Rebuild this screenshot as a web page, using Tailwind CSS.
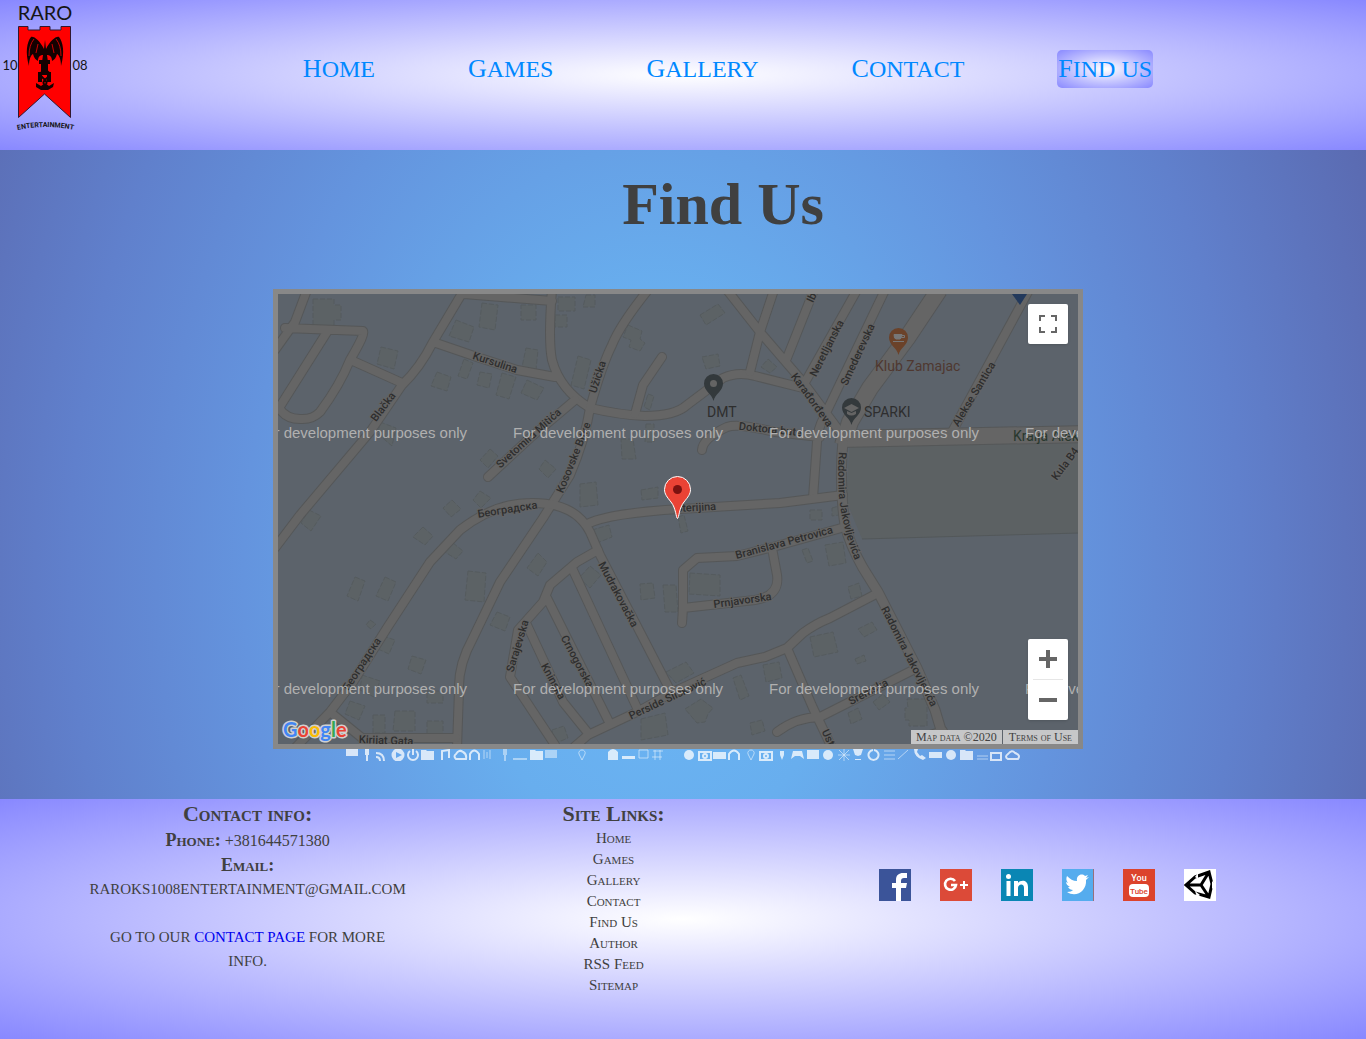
<!DOCTYPE html>
<html lang="en">
<head>
<meta charset="utf-8">
<meta name="viewport" content="width=device-width, initial-scale=1">
<title>RARO 1008 Entertainment - Find Us</title>
<script src="https://cdn.jsdelivr.net/npm/@tailwindcss/browser@4"></script>
</head>
<body class="flex min-h-screen flex-col font-['Liberation_Serif',serif] text-[#404040]">

<header class="flex h-[150px] shrink-0 items-start bg-[radial-gradient(white,#8888ff)]">
  <a href="#" aria-label="RARO Entertainment home" class="block w-[90px] shrink-0">
    <svg viewBox="0 0 90 135" class="block w-full">
      <g font-family="Lato, sans-serif" fill="#151515">
        <text x="45" y="20" font-size="20" text-anchor="middle">RARO</text>
        <text x="10" y="70" font-size="13" text-anchor="middle">10</text>
        <text x="80" y="70" font-size="13" text-anchor="middle">08</text>
      </g>
      <path d="M18.500 26.500H28V30H40V26.500H50V30H61V26.500H70.500V117.500L44.500 94L18.500 117.500Z" fill="#f00" stroke="#301830"/>
      <g fill="#140000">
        <path d="M44 49C40 41 34 36 31 37C27 42 25 52 29 66C29 59 31 55 33 54C34 58 36 60 38 61C38 57 40 55 43 55L42 62L45 66L48 62L47 55C50 55 52 57 52 61C54 60 56 58 57 54C59 55 61 59 61 66C65 52 63 42 59 37C56 36 50 41 46 49L45 40Z"/>
        <path d="M39 60h11v4h-2v8h3v10h-4v-7h-5v7h-4v-10h3v-8h-2zM36 83l5 3 4-3 4 3 5-3-1 4-5 3h-7l-5-3z"/>
      </g>
      <path d="M34 39Q29 45 29 56M56 39Q61 45 61 56M38 44L36 53M52 44L54 53" fill="none" stroke="#c00"/>
      <path d="M42 62Q50 66 44 70T43 78T46 84M48 62Q40 66 46 70T47 78T44 84" fill="none" stroke="#140000" stroke-width="2"/>
      <path id="arc" d="M13 131Q45 123 78 131" fill="none"/>
      <text font-family="Roboto, sans-serif" font-size="7" font-weight="700" fill="#151515"><textPath href="#arc" startOffset="50%" text-anchor="middle">ENTERTAINMENT</textPath></text>
    </svg>
  </a>
  <nav class="mt-[50px] flex flex-1 justify-center gap-[93px] text-[24px] leading-[38px] uppercase text-[#0088ff]">
    <a href="#" class="block first-letter:text-[26px]">Home</a>
    <a href="#" class="block first-letter:text-[26px]">Games</a>
    <a href="#" class="block first-letter:text-[26px]">Gallery</a>
    <a href="#" class="block first-letter:text-[26px]">Contact</a>
    <a href="#" class="block rounded-[5px] bg-[radial-gradient(white,#8888ff)] px-px first-letter:text-[26px]">Find us</a>
  </nav>
</header>

<main class="flex flex-col items-center bg-[radial-gradient(ellipse_58%_170%_at_48%_65%,#6cb8f6,#68aeee_25%,#6494de_52%,#6080cc_74%,#5a68ae)] pb-[38px]">
  <h1 class="pt-[19px] pl-20 text-[60px] leading-[70px] font-bold">Find Us</h1>

  <div class="relative mt-[50px] mr-[10px] w-[810px] max-w-full border-5 border-[#888]">
    <svg viewBox="278 294 800 450" class="block w-full bg-[#5c636b]" role="img" aria-label="Street map">
      <path d="M850 440L1080 438V533L862 539L846 500Z" fill="#5c6163"/>
      <path d="M862 539L1080 533" stroke="#53585a" fill="none"/>
      <g fill="#5c6265" stroke="#555b5e" stroke-dasharray="5 2">
        <path d="M313 299h21v6h7v15h-7v6h-21zM381 347l17 4-4 18-17-5zM456 320l18 7-5 15-20-6zM482 303l16 2-3 25-16-3zM521 305h15v15h-15zM526 348l12 2-2 20-14-3zM464 359l9 4-6 16-9-3zM480 372l12 2-3 14-12-3zM502 373l14 4-7 22-13-4zM527 380l17 8-7 12-16-7zM437 372l14 5-4 14-16-5zM380 422l16 6-4 18-14-12zM490 449l8 7-10 12-8-8zM480 491l11 7-10 10-8-8zM452 500l9 9-10 8-8-9zM309 510l12 6-10 15-10-8zM423 527l10 9-8 9-12-8zM453 543l10 8-7 8-11-7zM355 577l10 4-7 20-11-5zM385 577l11 5-8 19-12-5zM468 571l18 2-2 29-19-2zM497 612l13 5-5 14-15-6zM370 620l6 4-5 5-5-4zM383 636l12 4-6 14-11-5zM412 656l14 4-5 14-13-5zM362 675l18 6-6 16-14-7zM350 701l15 5-6 14-14-6zM373 715h12v18h-12zM395 711h20v20h-22zM427 691h16v12h-16zM427 721h16v15h-16zM538 553l9 9-9 14-11-8z"/>
        <path d="M558 297h17v14h-17zM586 295h9v12h-12zM555 315h12v12h-12zM628 325l14 6-2 8 5 4-5 8-11-4 2-7-8-3zM578 356l13 4-7 29-13-4zM648 394l6 2-4 14-6-3zM700 315l18-11 7 9-19 12zM702 357l16-3 2 12-14 3zM768 359l9 8-7 6-9-6zM621 439h12l3 20h-14zM646 424h8v18h-9zM545 460l11 9-8 9-9-9zM580 484l16-2 2 23-18 2zM641 490l17-3v11l-16 2zM592 530l17-5 3 12-15 6zM678 517l6-2 4 16-7 2zM590 566l11 9-11 13-11-10zM663 585h13l2 27h-13zM690 573l30 2v21l-31-2zM640 584l13-1 2 15-14 2zM666 672l20-10 8 11-18 10zM641 719l24-6 3 22-27 5zM685 709l16-10 12 9-5 6-3 8-8 1zM733 678l8-3 8 21-9 4zM763 665l16-3 3 16-16 4zM552 730l12-4 4 12-14 6zM802 550l6-2 5 13-6 2zM750 723l12-3 3 11-13 4zM825 545l18-3 3 21-17 3zM848 587l11-4 3 13-11 3zM858 629l14-7 5 8-13 7zM810 637l23-5 5 20-24 5zM855 659l9-4 2 6-9 3zM873 702l10-8 7 8-11 8zM848 713l10-5 4 11-11 5zM907 699h20v27h-18v-6h-4v-12h3zM810 510h12v10h-12zM832 508l7-2v9l-7 1z"/>
      </g>
      <defs>
        <g id="roads" fill="none" stroke-linecap="round" stroke-linejoin="round">
          <path d="M307 290L295 322L275 350M285 328L363 331Q366 333 350 360Q340 385 320 412Q312 420 300 419Q286 419 279 408L327 332M353 361L402 383M464 290L433 342Q420 368 402 385L370 432L300 515L275 548M433 342L477 357L517 370L555 377M464 294L552 301M552 290Q548 340 552 360Q560 390 590 408Q620 415 645 416Q675 416 687 405L723 378Q738 371 755 376L803 388"/>
          <path d="M648 290Q620 325 612 345Q602 365 590 408Q585 440 570 475L543 518L500 582L473 638Q458 665 459 690L457 748M488 477L530 438L575 400M662 357L643 385L635 414M727 290L760 332L803 382L843 436M774 290L760 332L750 372M814 290L787 358M857 290L803 386M885 290L825 415Q817 430 817 442L813 498M702 450Q703 438 727 427Q738 423 775 432L820 437M1029 290L952 432"/>
          <path d="M843 495L780 503L680 509Q610 513 587 524M295 748L330 712L353 682L387 628L430 562L460 530Q495 503 530 503Q575 502 590 532L600 555L640 632L670 690M598 550L577 562L550 585L543 602L518 630L510 677L555 745M572 568L638 710M547 598L610 724M527 625L563 702L588 733M573 748L588 735L637 712L673 692L737 663L765 657L787 648L803 633Q815 624 830 618L878 593M787 648L813 708L832 748M777 732Q797 717 820 717L917 668M682 623L683 608V570L697 558L737 556L773 547L845 527M683 608L755 600Q780 596 777 575L772 548M330 712L362 738H456M943 731L920 738"/>
        </g>
        <g id="mainroads" fill="none" stroke-linejoin="round"><path d="M939 290L907 338L870 388L850 422L843 445M840 439L1085 434"/></g>
        <path id="sideroad" d="M843 440Q839 485 845 525Q850 545 863 568L878 592L917 668L935 710L947 750" fill="none"/>
      </defs>
      <g stroke="#555758">
        <use href="#roads" stroke-width="10"/><use href="#mainroads" stroke-width="18"/><use href="#sideroad" stroke-width="11"/>
      </g>
      <g stroke="#656565">
        <use href="#roads" stroke-width="8"/><use href="#mainroads" stroke-width="16"/><use href="#sideroad" stroke-width="9"/>
      </g>
      <g font-family="Roboto, sans-serif" font-size="11" font-weight="500" fill="#2e2e2e" text-anchor="middle" stroke="#646464" stroke-width="2" paint-order="stroke">
        <text transform="translate(494 366) rotate(18)">Kursulina</text>
        <text transform="translate(386 409) rotate(-53)">Blačka</text>
        <text transform="translate(601 378) rotate(-72)">Užička</text>
        <text transform="translate(531 441) rotate(-42)">Svetomira Mitića</text>
        <text transform="translate(577 459) rotate(-68)">Kosovske Bitke</text>
        <text transform="translate(508 513) rotate(-9)">Београдска</text>
        <text transform="translate(365 666) rotate(-57)">Београдска</text>
        <text transform="translate(809 402) rotate(54)">Karađorđeva</text>
        <text transform="translate(830 350) rotate(-63)">Neretljanska</text>
        <text transform="translate(861 356) rotate(-65)">Smederevska</text>
        <text transform="translate(815 299) rotate(-65)">Ib</text>
        <text transform="translate(977 396) rotate(-59)">Alekse Santica</text>
        <text transform="translate(1068 466) rotate(-53)">Kula B4</text>
        <text transform="translate(770 433) rotate(6)">Doktora bute</text>
        <text transform="translate(696 511) rotate(-3)">Sterijina</text>
        <text transform="translate(785 546) rotate(-15)">Branislava Petrovica</text>
        <text transform="translate(743 604) rotate(-8)">Prnjavorska</text>
        <text transform="translate(615 596) rotate(62)">Mudrakovačka</text>
        <text transform="translate(574 663) rotate(62)">Crnogorska</text>
        <text transform="translate(550 683) rotate(62)">Kninska</text>
        <text transform="translate(521 647) rotate(-73)">Sarajevska</text>
        <text transform="translate(669 702) rotate(-25)">Perside Slišković</text>
        <text transform="translate(870 695) rotate(-28)">Sremska</text>
        <text transform="translate(825 739) rotate(65)">Ust</text>
        <text transform="translate(386 744) rotate(2)">Kirijat Gata</text>
        <text transform="translate(906 658) rotate(63)">Radomira Jakovljevića</text>
        <path id="rj" d="M839 452Q836 495 844 525Q848 545 860 572" fill="none" stroke="none"/>
        <text text-anchor="start"><textPath href="#rj">Radomira Jakovljevića</textPath></text>
      </g>
      <g font-family="Roboto, sans-serif" font-size="14" fill="#2e2e2e">
        <text x="707" y="417">DMT</text>
        <text x="864" y="417">SPARKI</text>
        <text x="875" y="371" fill="#4f3830">Klub Zamajac</text>
        <text x="1013" y="441" fill="#28382e">Kralja Alek</text>
      </g>
      <path id="pin" d="M713.500 401C712 394 704 391 704 383.500A9.500 9.500 0 0 1 723 383.500C723 391 715 394 713.500 401Z" fill="#33393c"/>
      <circle cx="713.500" cy="383.500" r="3.500" fill="#646464"/>
      <use href="#pin" x="138" y="24"/>
      <path d="M844 408l7.500-4 7.500 4-7.500 4zM847 411v3q4.500 3 9 0v-3l-4.500 2z" fill="#646464"/>
      <path d="M898.500 355C897 348 889 345 889 337.500A9.500 9.500 0 0 1 908 337.500C908 345 900 348 898.500 355Z" fill="#6b4229"/>
      <path d="M894 334.500h8q0 4-2 4.500h-4q-2 0-2-4.500zM893 341.500h11" fill="#777" stroke="#777"/><path d="M902 335.500h2.500v2h-2.500" fill="none" stroke="#777"/>
      <path d="M1012 294h15l-7 11z" fill="#22395c"/>
      <g font-family="'Liberation Sans', sans-serif" font-size="15" fill="#b0b0b0">
        <text x="257" y="438">For development purposes only</text><text x="513" y="438">For development purposes only</text><text x="769" y="438">For development purposes only</text><text x="1025" y="438">For development purposes only</text>
        <text x="257" y="694">For development purposes only</text><text x="513" y="694">For development purposes only</text><text x="769" y="694">For development purposes only</text><text x="1025" y="694">For development purposes only</text>
      </g>
      <path d="M677.500 518.500C676 518 676 508 671 502C667 497 664.500 494 664.500 489.500A13 13 0 0 1 690.500 489.500C690.500 494 688 497 684 502C679 508 679 518 677.500 518.500Z" fill="#ea4335" stroke="#fff"/>
      <circle cx="677.500" cy="489.500" r="4.500" fill="#7a1210"/>
      <g font-family="Lato, sans-serif" font-size="20" font-weight="700" stroke="#d0d0d0" stroke-width="3" paint-order="stroke" stroke-linejoin="round">
        <text x="283" y="737"><tspan fill="#4285f4">G</tspan><tspan fill="#ea4335">o</tspan><tspan fill="#fbbc05">o</tspan><tspan fill="#4285f4">g</tspan><tspan fill="#34a853">l</tspan><tspan fill="#ea4335">e</tspan></text>
      </g>
    </svg>
    <button type="button" aria-label="Toggle fullscreen" class="absolute top-[10px] right-[10px] grid size-10 place-items-center rounded-xs bg-white shadow">
      <svg viewBox="0 0 18 18" class="size-[18px]" fill="none" stroke="#666" stroke-width="2"><path d="M1 6V1H6M12 1H17V6M17 12V17H12M6 17H1V12"/></svg>
    </button>
    <div class="absolute right-[10px] bottom-6 flex w-10 flex-col items-center rounded-xs bg-white shadow">
      <button type="button" aria-label="Zoom in" class="grid size-10 place-items-center"><svg viewBox="0 0 18 18" class="size-[18px]" stroke="#666" stroke-width="4"><path d="M0 9H18M9 0V18"/></svg></button>
      <span class="h-px w-[30px] bg-[#e6e6e6]"></span>
      <button type="button" aria-label="Zoom out" class="grid size-10 place-items-center"><svg viewBox="0 0 18 18" class="size-[18px]" stroke="#666" stroke-width="4"><path d="M0 9H18"/></svg></button>
    </div>
    <div class="absolute right-0 bottom-0 flex gap-px text-[12px] leading-[14px] [font-variant:small-caps]">
      <span class="bg-[#c6c7c8] px-[5px]">Map data ©2020</span>
      <a href="#" class="bg-[#c6c7c8] px-[6px]">Terms of Use</a>
    </div>
  </div>

  <svg viewBox="347 749 675 12" class="block h-3 w-[675px] max-w-full" aria-hidden="true" fill="#fff" stroke="none" opacity=".75">
    <path d="M347 749h12v7h-12zM366 749h4v6h-4zM367 755h2v6h-2zM422 750h5l1 1h7v9h-13zM531 750h5l1 1h7v9h-13zM609 752q5-6 10 0v8h-10zM623 756h13v3h-13zM714 752h13v7h-13zM792 759l2-8h9l2 8-4-3h-5zM808 750h12v9h-12zM854 749h10l-2 6-3 1v3h3v1h-6v-1h3v-3l-3-1zM915 749q0 8 9 11l3-2-4-3-2 1-3-4 1-3zM930 752h13v6h-13zM961 750h5l1 1h7v9h-13zM781 751h4v4l-2 5-2-5z" />
    <path d="M504 749h4v6h-4zM505 755h2v6h-2zM514 758h14v2h-14zM546 750h12v8h-12z" opacity=".6"/>
    <circle cx="399" cy="755" r="6.500"/><path d="M397 752l6 3-6 3z" fill="#66aaf0"/>
    <circle cx="690" cy="755" r="5"/><circle cx="829" cy="755" r="5"/><circle cx="952" cy="755" r="5"/>
    <g fill="none" stroke="#fff" stroke-width="2">
      <path d="M411 751a5 5 0 1 0 6 0M414 749v6M443 760v-9l7-1v8M457 759q-3-3 0-5q3-5 7-2q4 2 3 7zM471 760v-6q4-7 9 0v6M730 760v-6q5-7 10 0v6M992 753h10v7h-10zM1009 759q-4-2 0-5q4-5 7-1q6 2 3 6zM874 750a5 5 0 1 0 1 0M377 753q8 0 8 8M377 757q4 0 4 4"/>
      <g stroke-width="1" opacity=".7"><path d="M485 750v9M488 752v6M491 750v9M583 750a3 3 0 0 1 3 4l-3 6-3-6a3 3 0 0 1 3-4M752 750a3 3 0 0 1 3 4l-3 6-3-6a3 3 0 0 1 3-4M640 750h9v8h-9zM654 751h10M653 757h10M656 750v10M661 750v10M840 750l10 10M850 750l-10 10M839 755h12M845 749v12M885 751h11M885 755h11M885 759h11M899 759l10-9M978 756h11M978 759h11"/></g>
      <path d="M700 752h12v8h-12zM761 752h12v8h-12z"/><circle cx="706" cy="756" r="2"/><circle cx="767" cy="756" r="2"/>
    </g>
  </svg>
</main>

<footer class="flex min-h-[240px] flex-1 bg-[radial-gradient(white,#8888ff)] pl-[6%] text-center">
  <section class="w-[25.8%]">
    <h2 class="text-[22px] leading-[29px] font-bold [font-variant:small-caps]">Contact info:</h2>
    <p class="text-[16px] leading-6"><b class="text-[18px] [font-variant:small-caps]">Phone:</b> +381644571380</p>
    <p class="text-[18px] leading-6 font-bold [font-variant:small-caps]">Email:</p>
    <p class="text-[15px] leading-6 uppercase">raroks1008entertainment@gmail.com</p>
    <p class="mt-6 text-[15px] leading-6 uppercase">Go to our <a href="#" class="text-[#0000ee]">contact page</a> for more<br>info.</p>
  </section>
  <section class="w-[31.2%]">
    <h2 class="text-[22px] leading-[29px] font-bold [font-variant:small-caps]">Site Links:</h2>
    <ul class="text-[15px] leading-[21px] [font-variant:small-caps]">
      <li><a href="#">Home</a></li>
      <li><a href="#">Games</a></li>
      <li><a href="#">Gallery</a></li>
      <li><a href="#">Contact</a></li>
      <li><a href="#">Find Us</a></li>
      <li><a href="#">Author</a></li>
      <li><a href="#">RSS Feed</a></li>
      <li><a href="#">Sitemap</a></li>
    </ul>
  </section>
  <section class="flex w-[36.4%] items-start justify-center gap-[29px] pt-[70px]">
    <a href="#" aria-label="Facebook"><svg viewBox="0 0 32 32" class="size-8"><path d="M0 0h32v32H0z" fill="#3b5499"/><path d="M17 32V19h-4v-5h4v-3c0-5 3-7 7-7h4v5h-3c-2 0-3 1-3 3v2h6l-1 5h-5v13z" fill="#fff"/></svg></a>
    <a href="#" aria-label="Google Plus"><svg viewBox="0 0 32 32" class="size-8"><path d="M0 0h32v32H0z" fill="#dc4a38"/><path d="M15 12a5.500 5.500 0 1 0 1 4h-5" fill="none" stroke="#fff" stroke-width="2.600"/><path d="M20 16h8M24 12v8" stroke="#fff" stroke-width="2"/></svg></a>
    <a href="#" aria-label="LinkedIn"><svg viewBox="0 0 32 32" class="size-8"><path d="M0 0h32v32H0z" fill="#0a86b4"/><path d="M5.500 12h4v15h-4zM13 12h4v2c2-3 10-4 10 4v9h-4v-8c0-5-6-4-6 0v8h-4z" fill="#fff"/><circle cx="7.500" cy="7.500" r="2.500" fill="#fff"/></svg></a>
    <a href="#" aria-label="Twitter"><svg viewBox="0 0 32 32" class="size-8"><path d="M0 0h32v32H0z" fill="#55acee"/><path d="M31.500 0v32" stroke="#98707c"/><path d="M5 23c3 0 5-1 6-2-2 0-4-1-5-3h2c-2-1-4-3-4-5l2 1c-2-2-2-5-1-7 3 3 6 5 10 5-1-6 5-8 8-5l3-1-2 3 3-1-3 3c1 11-10 18-19 12z" fill="#fff"/></svg></a>
    <a href="#" aria-label="YouTube"><svg viewBox="0 0 32 32" class="size-8"><path d="M0 0h32v32H0z" fill="#dc432c"/><rect x="6" y="15" width="20" height="13" rx="4" fill="#fff"/><g font-family="Roboto, sans-serif" font-size="9" text-anchor="middle"><text x="16" y="12" fill="#fff" font-weight="500">You</text><text x="16" y="25" font-size="8" fill="#dc432c" font-weight="500">Tube</text></g></svg></a>
    <a href="#" aria-label="Unity"><svg viewBox="0 0 32 32" class="size-8"><path d="M0 0h32v32H0z" fill="#fff"/><path d="M11 8L25 3L28 15L25 28L11 24L2 16ZM2 16H17M25 3L17 16L25 28" fill="none" stroke="#000" stroke-width="3"/><path d="M28 12l4 4-4 4zM14 4l-3 4 3 2zM11 22l2 6 3-2z" fill="#fff"/></svg></a>
  </section>
</footer>
</body>
</html>
